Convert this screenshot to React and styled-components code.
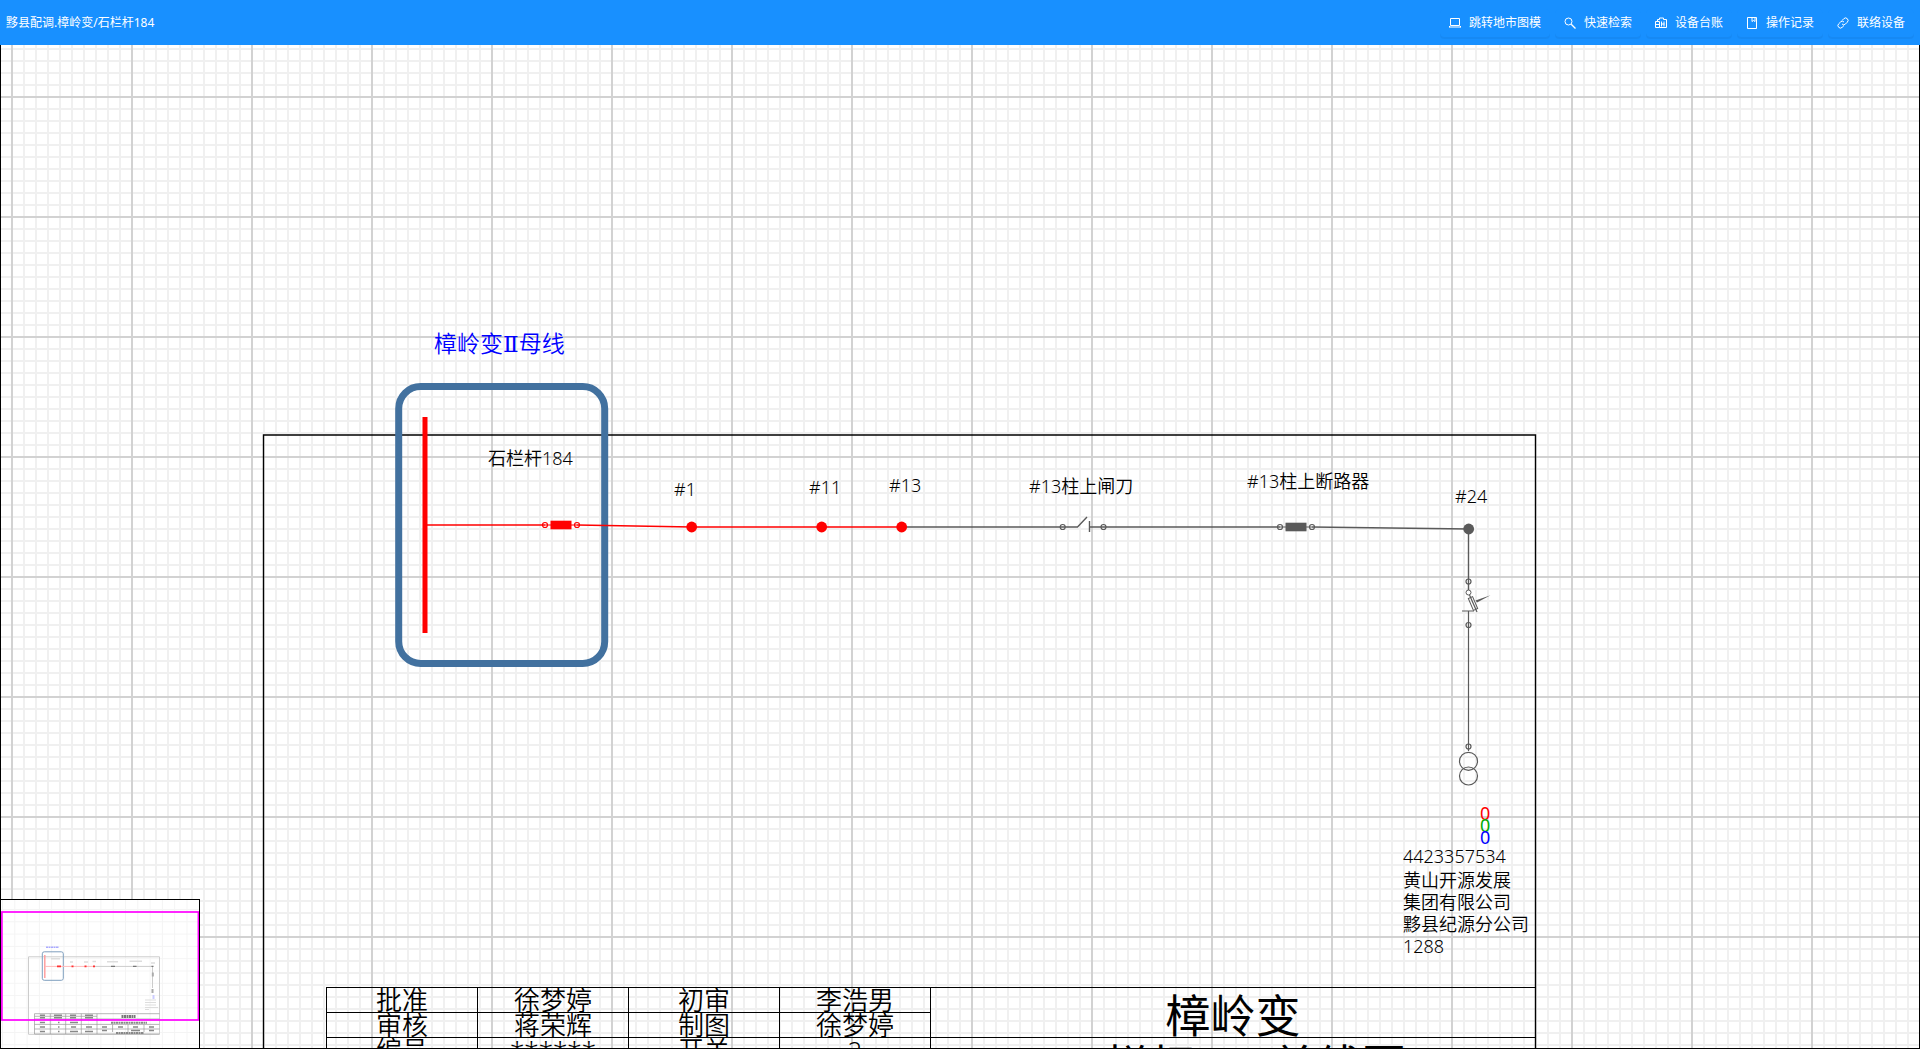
import React from 'react';
import styled, { createGlobalStyle } from 'styled-components';

const GlobalStyle = createGlobalStyle`
  * { box-sizing: border-box; }
  body { margin: 0; background: #fff; }
  body, button { font-family: "Noto Sans", "Noto Sans CJK SC", sans-serif; }
`;

const LIVE = '#ff0000';
const DEAD = '#5a5a5a';

const Page = styled.div`
  display: flex;
  flex-direction: column;
  height: 100vh;
  overflow: hidden;
`;

const TopBar = styled.header`
  flex: none;
  display: flex;
  align-items: center;
  justify-content: space-between;
  height: 45px;
  padding: 0 6px;
  background: #1890ff;
  color: #fff;
`;

const Title = styled.h1`
  margin: 0;
  font-size: 12px;
  font-weight: 400;
  line-height: 18px;
`;

const Toolbar = styled.nav`
  display: flex;
  gap: 5px;
`;

const ToolButton = styled.button`
  display: flex;
  align-items: center;
  gap: 8px;
  height: 28px;
  padding: 0 8px;
  border: 1px solid #1890ff;
  border-radius: 4px;
  background: #1890ff;
  box-shadow: 0 2px 0 rgba(0, 0, 0, 0.045);
  color: #fff;
  font-size: 12px;
  line-height: 18px;
  white-space: nowrap;
  cursor: pointer;
`;

const ToolIcon = styled.svg`
  flex: none;
  width: 12px;
  height: 12px;
  fill: none;
  stroke: currentColor;
  stroke-width: 1;
`;

const Canvas = styled.main`
  position: relative;
  flex: 1;
  min-height: 0;
  overflow: hidden;
  border: solid #000;
  border-width: 0 1px 1px;
  background-color: #fff;
  background-image:
    linear-gradient(to right, #d2d2d2 2px, transparent 2px),
    linear-gradient(to bottom, #d2d2d2 2px, transparent 2px),
    linear-gradient(to right, #f0f0f0 2px, transparent 2px),
    linear-gradient(to bottom, #f0f0f0 2px, transparent 2px);
  background-size: 120px 120px, 120px 120px, 12px 12px, 12px 12px;
  background-position: 11px 0, 0 51px, 11px 0, 0 3px;
  background-origin: border-box;
`;

const Drawing = styled.svg`
  position: absolute;
  top: -45px;
  left: -1px;
  width: 1920px;
  height: 1200px;
`;

const Label = styled.text`
  font-family: "Noto Sans", "Noto Sans CJK SC", sans-serif;
  font-size: ${(p) => p.$size || 18}px;
  font-weight: ${(p) => p.$weight || 350};
  fill: ${(p) => p.$color || '#000'};
`;

const Numeral = styled.tspan`
  font-family: "DejaVu Serif", serif;
`;

const TitleBlock = styled.table`
  position: absolute;
  top: 942px;
  left: 325px;
  width: 1210px;
  table-layout: fixed;
  border-collapse: collapse;
  color: #000;
`;

const Cell = styled.td`
  height: 25px;
  padding: 0;
  border: 1px solid #000;
  text-align: center;
  vertical-align: top;
  font-size: 26px;
  font-weight: 350;
  line-height: 24px;
  white-space: nowrap;
`;

const NameCell = styled(Cell)`
  padding-top: 6px;
  font-size: 45px;
  font-weight: 400;
  line-height: 43px;
`;

const Overview = styled.aside`
  position: absolute;
  left: 0;
  bottom: 0;
  width: 199px;
  height: 149px;
  border: solid #000;
  border-width: 1px 1px 0 0;
  background: #fff;
`;

const OverviewDrawing = styled.svg`
  display: block;
  width: 198px;
  height: 148px;
`;

const icons = {
  laptop: <><path d="M1.500 1.500h9v7h-9zM.5 10h11" /><path d="M.5 9v1.500M11.500 9v1.500" /></>,
  search: <><circle cx="4.500" cy="4.500" r="3.500" /><path d="M7.200 7.200l4.300 4.300" strokeWidth="1.300" /></>,
  ledger: <><path d="M.5 4.500h4v6h-4zM4.500 10.500h7v-8h-3v-1.500h-4v1.500h-2v2M.5 7.500h4M6.500 4.500v5M9 4.500v5M6.500 7h3" /></>,
  record: <><path d="M1.500.5h9v11h-9z" /><path d="M6 .5v4l1.500-1 1.500 1v-4" /></>,
  link: <><path d="M5 3.500l1.800-1.800a2.400 2.400 0 0 1 3.500 3.500L8.500 7a2.400 2.400 0 0 1-3.500 0" /><path d="M7 8.500l-1.800 1.800a2.400 2.400 0 0 1-3.500-3.500L3.500 5a2.400 2.400 0 0 1 3.500 0" /></>,
};

const tools = [
  ['laptop', '跳转地市图模'],
  ['search', '快速检索'],
  ['ledger', '设备台账'],
  ['record', '操作记录'],
  ['link', '联络设备'],
];

const labels = [
  [488, 465, '石栏杆184'],
  [674, 496, '#1'],
  [809, 494, '#11'],
  [889, 492, '#13'],
  [1029, 493, '#13柱上闸刀'],
  [1247, 488, '#13柱上断路器'],
  [1455, 503, '#24'],
  [1403, 863, '4423357534'],
  [1403, 887, '黄山开源发展'],
  [1403, 909, '集团有限公司'],
  [1403, 931, '黟县纪源分公司'],
  [1403, 953, '1288'],
];

const phases = [
  [820, '#ff0000'],
  [832, '#00aa00'],
  [844, '#0000ff'],
];

function Terminal({ x, y, color = DEAD }) {
  return <circle cx={x} cy={y} r="2.500" fill="none" stroke={color} strokeWidth="1.200" />;
}

function Breaker({ x, y, color }) {
  return (
    <g>
      <Terminal x={x - 16} y={y} color={color} />
      <Terminal x={x + 16} y={y} color={color} />
      <path d={`M${x - 16} ${y}h32`} stroke={color} />
      <rect x={x - 10.5} y={y - 4.3} width="21" height="8.600" fill={color} />
    </g>
  );
}

function Pole({ x, y, color }) {
  return <circle cx={x} cy={y} r="5.400" fill={color} />;
}

function Network() {
  return (
    <g fill="none">
      <path d="M263.500 1188V435H1535.500V1188z" stroke="#000" strokeWidth="1.400" />
      <rect x="398.700" y="386.500" width="206" height="277" rx="22" stroke="#42719f" strokeWidth="7" />
      <path d="M425 417v216" stroke={LIVE} strokeWidth="5" />
      <path d="M427 525H545M577 525L692 527H902" stroke={LIVE} strokeWidth="1.300" />
      <Breaker x={561} y={525} color={LIVE} />
      <path d="M902 527H1077.500L1087 517M1089.500 521v11M1089.500 527H1280M1312 527L1468.500 529V593" stroke={DEAD} strokeWidth="1.400" />
      <Terminal x={1062.7} y={527} />
      <Terminal x={1103.5} y={527} />
      <Breaker x={1296} y={527} color={DEAD} />
      <Pole x={691.7} y={527} color={LIVE} />
      <Pole x={821.7} y={527} color={LIVE} />
      <Pole x={901.7} y={527} color={LIVE} />
      <Pole x={1468.7} y={529} color={DEAD} />
      <Terminal x={1468.5} y={581.5} />
      <circle cx="1468.500" cy="592.500" r="2.500" fill="#fff" stroke={DEAD} />
      <path d="M1469.500 595L1477 612M1462 611h12M1468.500 611V751" stroke={DEAD} strokeWidth="1.200" />
      <rect x="1470.700" y="597" width="4.600" height="13" transform="rotate(-23 1473 603.500)" stroke={DEAD} />
      <path d="M1475.500 600.500L1490.500 595.300L1477 602.500z" fill={DEAD} />
      <Terminal x={1468.5} y={625} />
      <Terminal x={1468.5} y={746.5} />
      <circle cx="1468.500" cy="761.300" r="9" stroke={DEAD} strokeWidth="1.200" />
      <circle cx="1468.500" cy="776" r="9" stroke={DEAD} strokeWidth="1.200" />
    </g>
  );
}

function Minimap() {
  return (
    <OverviewDrawing viewBox="1 900 198 148" aria-label="缩略图">
      <defs>
        <pattern id="mini-grid" x="2" y="909" width="12.300" height="12.300" patternUnits="userSpaceOnUse">
          <path d="M0 .5H12.300M.5 0V12.300" stroke="#f4f4f4" />
        </pattern>
      </defs>
      <rect x="0" y="899" width="200" height="150" fill="url(#mini-grid)" />
      <g fill="none">
        <path d="M28.500 956.800H159.500V1034.300H28.500z" stroke="#ccc" />
        <rect x="42.300" y="951.800" width="21" height="28.500" rx="2" stroke="#7f9fbe" />
        <path d="M44.800 955v23" stroke="#f99" strokeWidth="1.400" />
        <path d="M45 966.400H94" stroke="#fbb" />
        <path d="M94 966.400H152.500V988" stroke="#ccc" />
        <path d="M57 966.400h4M71.500 966.400h2M84.500 966.400h2M93 966.400h2" stroke="#f33" strokeWidth="1.600" />
        <path d="M111 966.400h4M133 966.400h3.500M151.500 966.400h2" stroke="#777" strokeWidth="1.200" />
        <path d="M152.800 972.500v4M152.500 989v4" stroke="#aaa" strokeWidth="2" />
        <path d="M46 947.300h13" stroke="#aaf" strokeWidth="1.600" strokeDasharray="2 .5" />
        <path d="M51 958.700h9M70 962h3M84 962h4M92.500 961.500h3.500M107 961.700h11M129.500 961.300h12.500M151 963h4" stroke="#ddd" strokeWidth="1.500" />
        <path d="M153.500 995v4" stroke="#ccf" strokeWidth="2" />
        <path d="M145 1000h11M145 1002.500h11M145 1005h11M145 1007.500h13M145 1009.500h4" stroke="#ddd" />
        <path d="M34.500 1034V1013.700H159.500M50.300 1013.700V1034M65.700 1013.700V1034M81.300 1013.700V1034M97 1013.700V1034M34.500 1016.300H97M34.500 1019H159.500M34.500 1024.400H159.500M34.500 1029H159.500M34.500 1034H159.500M112.500 1024.400V1032M128 1024.400V1032M144 1024.400V1032" stroke="#999" strokeWidth=".7" />
        <path d="M40 1015.200h5M54 1015.200h8M70 1015.200h6M85 1015.200h8M40 1017.800h5M54 1017.800h8M70 1017.800h6M85 1017.800h8M40 1022.500h5M58 1022.500h1.500M70 1022.500h8M40 1027h5M58 1027h1.500M71 1027h5M86 1027h6M40 1031.500h5M58 1031.500h1.500M70 1031.500h8M85 1031.500h8M102 1027h5M118 1027h5M133 1027h5M149 1027h5M102 1030.500h5M131 1030.500h9M149 1030.500h5" stroke="#888" strokeWidth="1.500" />
        <path d="M121.500 1016.500h14" stroke="#777" strokeWidth="3" strokeDasharray="2 .5" />
        <path d="M111 1022.800h36" stroke="#888" strokeWidth="2" strokeDasharray="2 .5" />
        <path d="M116 1033h28" stroke="#888" strokeWidth="2" strokeDasharray="2 .5" />
        <rect x="1.900" y="912" width="196.500" height="108" stroke="#ff00ff" strokeWidth="1.700" />
      </g>
    </OverviewDrawing>
  );
}

export default function App() {
  return (
    <Page>
      <GlobalStyle />
      <TopBar>
        <Title>黟县配调.樟岭变/石栏杆184</Title>
        <Toolbar>
          {tools.map(([icon, text]) => (
            <ToolButton key={icon} type="button">
              <ToolIcon viewBox="0 0 12 12" aria-hidden="true">{icons[icon]}</ToolIcon>
              {text}
            </ToolButton>
          ))}
        </Toolbar>
      </TopBar>
      <Canvas>
        <Drawing viewBox="0 0 1920 1200">
          <Network />
          <Label x="434" y="352" $size={23} $color="#0000ff">樟岭变<Numeral>Ⅱ</Numeral>母线</Label>
          {labels.map(([x, y, text]) => <Label key={text} x={x} y={y}>{text}</Label>)}
          {phases.map(([y, color]) => <Label key={color} x="1480" y={y} $color={color} $weight={400}>0</Label>)}
        </Drawing>
        <TitleBlock>
          <colgroup>
            <col width="151" /><col width="151" /><col width="151" /><col width="151" /><col />
          </colgroup>
          <tbody>
            <tr><Cell>批准</Cell><Cell>徐梦婷</Cell><Cell>初审</Cell><Cell>李浩男</Cell><NameCell rowSpan={2}>樟岭变</NameCell></tr>
            <tr><Cell>审核</Cell><Cell>蒋荣辉</Cell><Cell>制图</Cell><Cell>徐梦婷</Cell></tr>
            <tr><Cell>编号</Cell><Cell>******</Cell><Cell>开关</Cell><Cell>2</Cell><NameCell>石栏杆184单线图</NameCell></tr>
          </tbody>
        </TitleBlock>
        <Overview><Minimap /></Overview>
      </Canvas>
    </Page>
  );
}
